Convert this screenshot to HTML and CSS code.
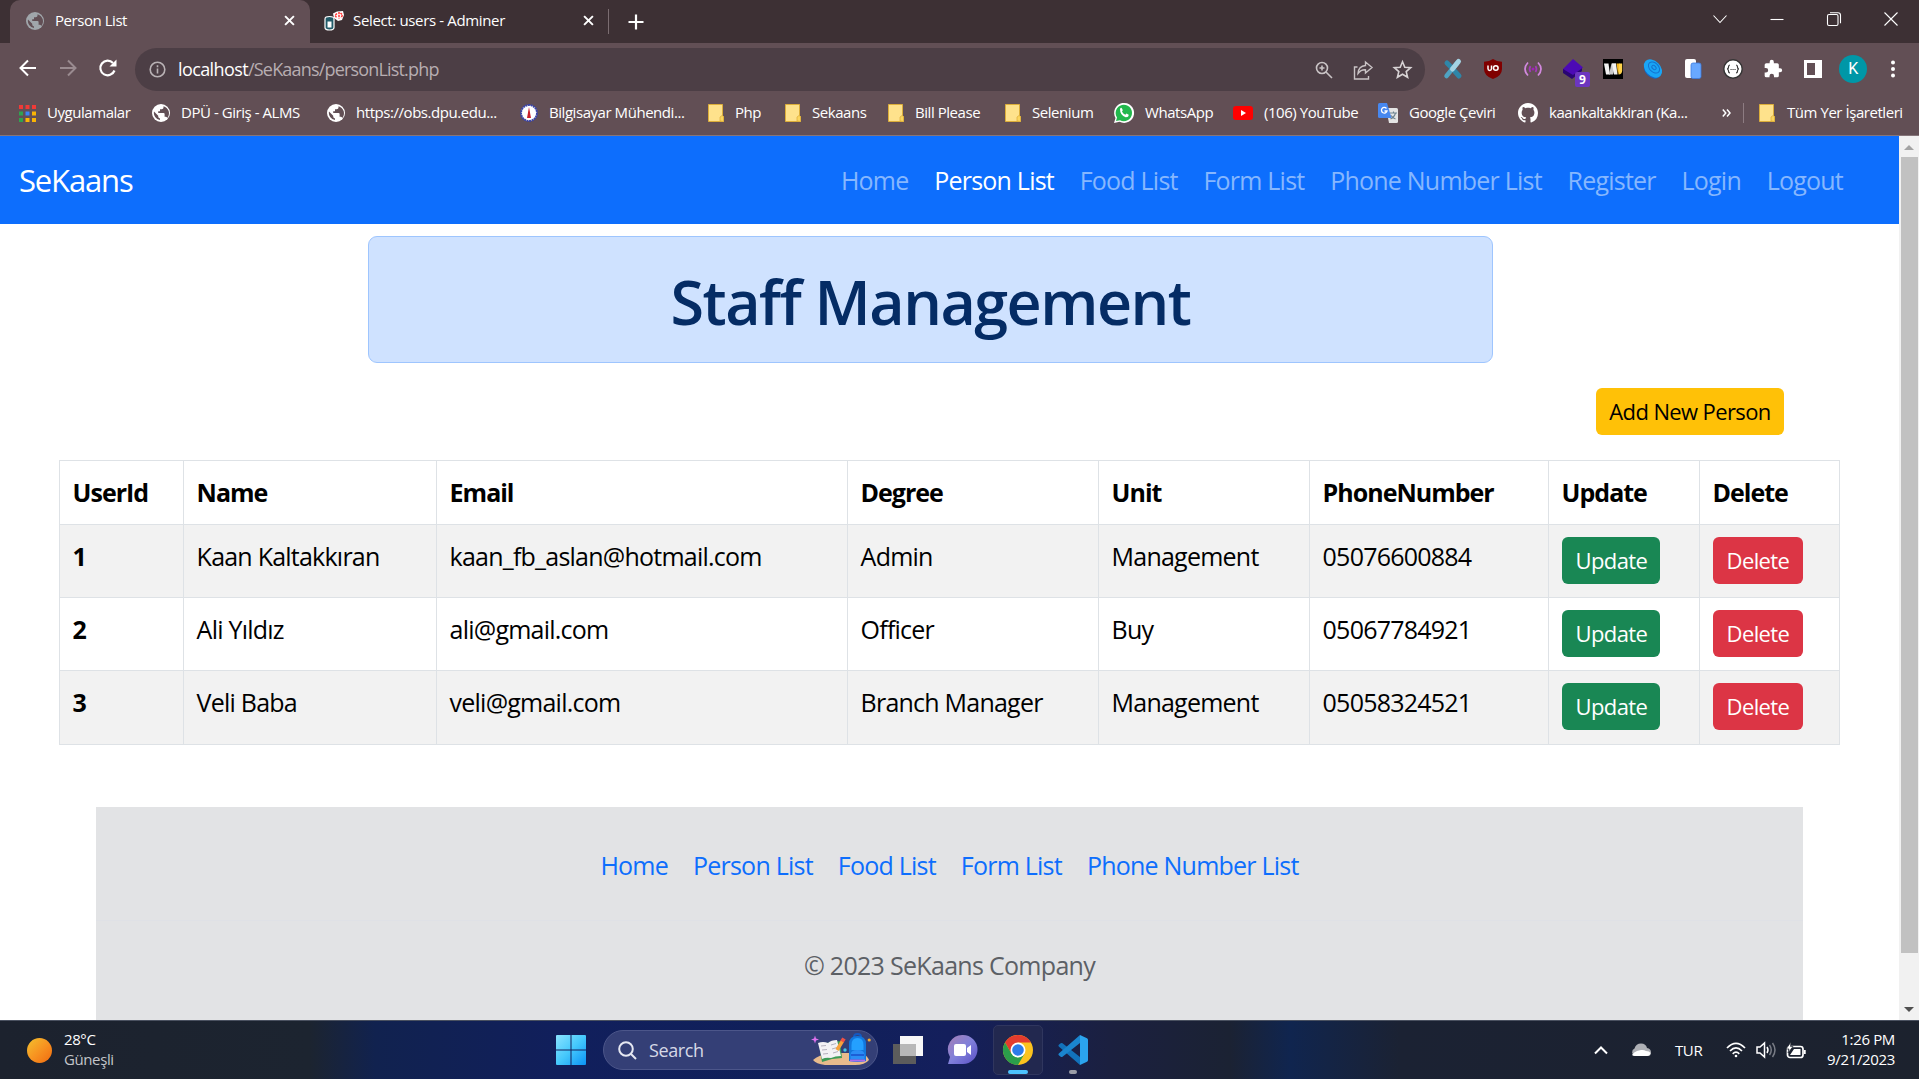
FILE: index.html
```html
<!DOCTYPE html>
<html lang="tr">
<head>
<meta charset="utf-8">
<title>Person List</title>
<link rel="stylesheet" href="styles.css">
</head>
<body>
<svg width="0" height="0" class="defs" aria-hidden="true">
  <defs>
    <symbol id="globe" viewBox="0 0 18 18"><circle cx="9" cy="9" r="9" fill="currentColor"/><path d="M11.500 2.300v1.200q0 1.800-1.800 1.800H8v1.900H6.200V9h5.400q1 0 1 1v2.700h1q1.200 0 1.700 1.200A7.200 7.200 0 0 0 11.500 2.300zM2 7.500A7.200 7.200 0 0 0 8 16.100V14.400q-1.800 0-1.800-1.800v-.9z" fill="var(--land)"/></symbol>
    <symbol id="folder" viewBox="0 0 16 18"><path d="M.5.5h14v11l1 1v5H.5z" fill="#fee28c" stroke="#dcae3a"/><path d="M12 17v-4l2-1.500 1.500 1v5z" fill="#fbd65f" stroke="#dcae3a" stroke-width=".7"/></symbol>
    <symbol id="cross" viewBox="0 0 10 10"><path d="m1 1 8 8M9 1 1 9" stroke="#fff" stroke-width="1.800" fill="none"/></symbol>
  </defs>
</svg>

<header class="chrome">
  <div class="tabstrip">
    <div class="tab tab-active">
      <svg class="fav gray-globe" width="18" height="18"><use href="#globe"/></svg>
      <span class="tab-title">Person List</span>
      <svg class="tab-close" width="11" height="11"><use href="#cross"/></svg>
    </div>
    <div class="tab tab-idle">
      <svg class="fav" width="20" height="20" viewBox="0 0 20 20"><path d="M1 8Q1 5.500 5.500 5.500T10 8v8.500Q10 19 5.500 19T1 16.500z" fill="#225b69" stroke="#fff" stroke-width="1.200"/><path d="M3.500 10.500h4v6h-4z" fill="#fff"/><path d="M9 2.500 13 .5l6-.5 1 4-2 5-4 1-4-3z" fill="#fff"/><path d="m13 2.500-2 2 2 2.500M16.500 2l2 2-1.500 3M15 1v6.500" fill="none" stroke="#f33" stroke-width="1.500" stroke-dasharray="2.200 .8"/></svg>
      <span class="tab-title">Select: users - Adminer</span>
      <svg class="tab-close" width="11" height="11"><use href="#cross"/></svg>
    </div>
    <span class="tab-sep"></span>
    <svg class="new-tab" width="16" height="16" viewBox="0 0 16 16"><path d="M8 .5v15M.5 8h15" stroke="#fff" stroke-width="2.200"/></svg>
    <div class="win-controls">
      <svg width="14" height="14" viewBox="0 0 14 14"><path d="m.5 3.500 6.500 7 6.500-7"/></svg>
      <svg width="14" height="14" viewBox="0 0 14 14"><path d="M.5 7.500h13"/></svg>
      <svg width="14" height="14" viewBox="0 0 14 14"><rect x=".5" y="2.500" width="10.500" height="11" rx="1.500"/><path d="M3 .8h8q2.500 0 2.500 2.500v8"/></svg>
      <svg width="14" height="14" viewBox="0 0 14 14"><path d="m.5.5 13 13M13.500.5l-13 13"/></svg>
    </div>
  </div>

  <div class="toolbar">
    <div class="nav-buttons">
      <svg width="18" height="18" viewBox="0 0 18 18"><path d="M17 9H2M9 1.500 1.500 9 9 16.500" fill="none" stroke="#fff" stroke-width="2"/></svg>
      <svg width="18" height="18" viewBox="0 0 18 18"><path d="M1 9h15M9 1.500 16.500 9 9 16.500" fill="none" stroke="#9a8b90" stroke-width="2"/></svg>
      <svg width="18" height="18" viewBox="0 0 18 18"><path d="M15.500 11.500A7.300 7.300 0 1 1 14 4" fill="none" stroke="#fff" stroke-width="2.200"/><path d="M17.500.5v7h-7z" fill="#fff"/></svg>
    </div>
    <div class="omnibox">
      <svg width="17" height="17" viewBox="0 0 17 17" fill="none" stroke="#b9b2b5" stroke-width="1.600"><circle cx="8.500" cy="8.500" r="7.300"/><path d="M8.500 7.500v5M8.500 4.300v1.900"/></svg>
      <span class="url"><b>localhost</b>/SeKaans/personList.php</span>
      <div class="omni-actions">
        <svg width="18" height="18" viewBox="0 0 18 18" fill="none" stroke="#c9c3c5" stroke-width="1.600"><circle cx="7" cy="7" r="5.500"/><path d="m11 11 6 6M4.500 7h5M7 4.500v5"/></svg>
        <svg width="20" height="20" viewBox="0 0 20 20" fill="none" stroke="#c9c3c5" stroke-width="1.400"><path d="M4.500 7H1.500v12h14v-3"/><path d="M12.500 2 19 7.500 12.500 13V9.800Q8 9.500 5 13.500q.5-7.500 7.500-8z"/></svg>
        <svg width="19" height="19" viewBox="0 0 19 19" fill="none" stroke="#d8d3d5" stroke-width="1.600"><path d="m9.500 1.800 2.300 5.400 5.900.5-4.500 3.900 1.400 5.700-5.100-3-5.100 3 1.400-5.700L1.300 7.700l5.900-.5z"/></svg>
      </div>
    </div>
    <div class="extensions">
      <svg width="20" height="20" viewBox="0 0 20 20"><path d="m4 4 4.500 4.500M12 12.500l4 4.500" stroke="#2e86a8" stroke-width="5" stroke-linecap="round"/><path d="M14.500 3.500 3.500 17" stroke="#4fa3c2" stroke-width="4.500" stroke-linecap="round"/><path d="M15.500 2.500 9.500 10" stroke="#a5d3e3" stroke-width="5" stroke-linecap="round"/></svg>
      <svg width="18" height="20" viewBox="0 0 18 20"><path d="M9 0q4 2.800 9 2.800V10q0 7-9 10Q0 17 0 10V2.800Q5 2.800 9 0z" fill="#800000"/><path d="M4 6.500v3.300q0 1.700 1.700 1.700T7.500 9.800V6.500" fill="none" stroke="#fff" stroke-width="1.500"/><circle cx="11.800" cy="9" r="2.300" fill="none" stroke="#fff" stroke-width="1.500"/></svg>
      <svg width="18" height="16" viewBox="0 0 18 16" fill="none" stroke="#d289de" stroke-width="1.700"><path d="M4 1.500Q-2 8 4 14.500M14 1.500q6 6.500 0 13"/><path d="M6.500 5q-2 3 0 6M11.500 5q2 3 0 6" stroke="#a23ab8"/><circle cx="9" cy="8" r="1.500" fill="#a020b8" stroke="none"/></svg>
      <span class="ext-badged"><svg width="20" height="20" viewBox="0 0 20 20"><path d="M0 10v4l9 6 10-8V8z" fill="#2a0573"/><path d="m10 0 10 8.500L10 16 0 10z" fill="#4c0ab5"/></svg><i>9</i></span>
      <svg width="20" height="20" viewBox="0 0 20 20"><path d="M0 0h20v20H0z"/><path d="M1 4.500h4.500l1.500 11H3z" fill="#f2f2f2"/><path d="M6 15.500 8.500 4.500H13l-3 11z" fill="#c9c9c9"/><path d="M9 4.500h4l1.500 11H11z" fill="#f2f2f2"/><path d="m13.500 4.500 1.500 11 1.500-5V4.500z" fill="#f4b51c"/><path d="M16 4.500h3.200v7q-.2 4-3.700 4z" fill="#ffd24a"/></svg>
      <svg width="20" height="20" viewBox="0 0 20 20"><ellipse cx="9" cy="11.500" rx="9.500" ry="6.500" transform="rotate(45 9 11.500)" fill="#1468c7"/><ellipse cx="10" cy="9.500" rx="10.500" ry="7.500" transform="rotate(45 10 9.500)" fill="#19a5f5"/><ellipse cx="11" cy="8.500" rx="6.500" ry="4.500" transform="rotate(45 11 8.500)" fill="none" stroke="#1472cf"/><ellipse cx="11" cy="8.500" rx="2.500" ry="1.700" transform="rotate(45 11 8.500)" fill="none" stroke="#1472cf"/></svg>
      <svg width="18" height="20" viewBox="0 0 18 20"><rect x="1" width="11" height="19" rx="2" fill="#fff"/><rect x="7" y="4" width="10" height="15.500" rx="2" fill="#68a8ff" stroke="#3c7ce0" stroke-width=".8"/></svg>
      <svg width="20" height="20" viewBox="0 0 20 20"><circle cx="10" cy="10" r="9.200" fill="#fff" stroke="#333" stroke-width="1.400"/><path d="M7 6Q5.500 6 5.500 8T4 10q1.500 0 1.500 2T7 14M13 6q1.500 0 1.500 2t1.500 2q-1.500 0-1.500 2T13 14" fill="none" stroke="#333" stroke-width="1.200"/><path d="M7.500 10.500h5.500" stroke="#333" stroke-width="1.200" stroke-dasharray="1.100 .9"/></svg>
      <svg width="20" height="20" viewBox="0 0 24 24"><path fill="#fff" d="M20.500 11H19V7a2 2 0 0 0-2-2h-4V3.500a2.500 2.500 0 0 0-5 0V5H4a2 2 0 0 0-2 2v3.800h1.500a2.700 2.700 0 0 1 0 5.400H2V20a2 2 0 0 0 2 2h3.800v-1.500a2.700 2.700 0 0 1 5.400 0V22H17a2 2 0 0 0 2-2v-4h1.500a2.500 2.500 0 0 0 0-5z"/></svg>
      <svg width="18" height="18" viewBox="0 0 18 18"><path d="M1.500 1.500h15v15h-15z" fill="none" stroke="#fff" stroke-width="3"/><path d="M11 1h6v16h-6z" fill="#fff"/></svg>
      <span class="avatar">K</span>
      <svg width="4" height="18" viewBox="0 0 4 18" fill="#fff"><circle cx="2" cy="2.500" r="2"/><circle cx="2" cy="9" r="2"/><circle cx="2" cy="15.500" r="2"/></svg>
    </div>
  </div>

  <nav class="bookmarks">
    <span class="bm"><svg width="17" height="17" viewBox="0 0 17 17"><path d="M0 0h4v4H0zM6.500 0h4v4h-4zM13 0h4v4h-4z" fill="#f03a37"/><path d="M0 6.500h4v4H0zM0 13h4v4H0z" fill="#2fa350"/><path d="M6.500 6.500h4v4h-4z" fill="#3a83f5"/><path d="M13 6.500h4v4h-4zM6.500 13h4v4h-4zM13 13h4v4h-4z" fill="#fbb404"/></svg><span>Uygulamalar</span></span>
    <span class="bm"><svg class="white-globe" width="18" height="18"><use href="#globe"/></svg><span>DPÜ - Giriş - ALMS</span></span>
    <span class="bm"><svg class="white-globe" width="18" height="18"><use href="#globe"/></svg><span>https://obs.dpu.edu...</span></span>
    <span class="bm"><svg width="18" height="18" viewBox="0 0 18 18"><circle cx="9" cy="9" r="8" fill="#fff" stroke="#3a44a8" stroke-width="2" stroke-dasharray="2 .6"/><path d="m9 3-2 11h4z" fill="#c8202c"/></svg><span>Bilgisayar Mühendi...</span></span>
    <span class="bm"><svg width="16" height="18"><use href="#folder"/></svg><span>Php</span></span>
    <span class="bm"><svg width="16" height="18"><use href="#folder"/></svg><span>Sekaans</span></span>
    <span class="bm"><svg width="16" height="18"><use href="#folder"/></svg><span>Bill Please</span></span>
    <span class="bm"><svg width="16" height="18"><use href="#folder"/></svg><span>Selenium</span></span>
    <span class="bm"><svg width="20" height="20" viewBox="0 0 20 20"><path d="M0 20 1.500 15A10 10 0 1 1 5.500 18.800z" fill="#fff"/><path d="m2 18 1-3.500a8.200 8.200 0 1 1 3 2.700z" fill="#22b84c"/><path d="M6 6q1-2 2-.5l.8 1.800-.8 1.200q1 2.300 3.300 3.200l1.200-1.200 2.200 1.200q0 2.600-3 2.500Q6 12.500 6 6z" fill="#fff"/></svg><span>WhatsApp</span></span>
    <span class="bm"><svg width="20" height="14" viewBox="0 0 20 14"><rect width="20" height="14" rx="3" fill="#f00"/><path d="m8 4 5 3-5 3z" fill="#fff"/></svg><span>(106) YouTube</span></span>
    <span class="bm"><svg width="20" height="20" viewBox="0 0 20 20"><path d="M8 5h10.500q1.500 0 1.500 1.500V18.500q0 1.500-1.500 1.500H11z" fill="#e4e4e4"/><path d="M12 10h7M15.500 8.500V10m2 0q-1 4-5 6m0-4q2 3 5 4" fill="none" stroke="#6d8390" stroke-width="1.100"/><path d="M1.500 0H9l4.500 15h-12Q0 15 0 13.500V1.500Q0 0 1.500 0z" fill="#4788f0"/><path d="M8.500 5.500A2.800 2.800 0 1 0 9 8H6.500" fill="none" stroke="#fff" stroke-width="1.300"/></svg><span>Google Çeviri</span></span>
    <span class="bm"><svg width="20" height="20" viewBox="0 0 16 16"><path fill="#fff" d="M8 0C3.580 0 0 3.580 0 8c0 3.540 2.290 6.530 5.470 7.590.4.070.55-.17.55-.38 0-.19-.01-.82-.01-1.490-2.010.37-2.530-.49-2.690-.94-.09-.23-.48-.94-.82-1.130-.28-.15-.68-.52-.01-.53.63-.01 1.080.58 1.230.82.72 1.210 1.870.87 2.330.66.070-.52.28-.87.51-1.070-1.780-.2-3.640-.89-3.640-3.950 0-.87.31-1.590.82-2.150-.08-.2-.36-1.020.08-2.120 0 0 .67-.21 2.200.82.64-.18 1.320-.27 2-.27s1.360.09 2 .27c1.530-1.040 2.200-.82 2.200-.82.44 1.100.16 1.920.08 2.120.51.56.82 1.270.82 2.150 0 3.070-1.870 3.750-3.650 3.950.29.25.54.73.54 1.480 0 1.070-.01 1.930-.01 2.200 0 .21.15.46.55.38A8.010 8.010 0 0 0 16 8c0-4.420-3.580-8-8-8z"/></svg><span>kaankaltakkiran (Ka...</span></span>
    <span class="bm bm-more"><svg width="9" height="8" viewBox="0 0 9 8"><path d="m.8.5 3 3.500-3 3.500M5 .5 8 4 5 7.500" fill="none" stroke="#fff" stroke-width="1.500"/></svg></span>
    <span class="bm bm-all"><svg width="16" height="18"><use href="#folder"/></svg><span>Tüm Yer İşaretleri</span></span>
  </nav>
</header>

<div class="viewport">
  <main class="page">
    <nav class="navbar">
      <a class="brand">SeKaans</a>
      <ul class="nav-links">
        <li>Home</li><li class="active">Person List</li><li>Food List</li><li>Form List</li><li>Phone Number List</li><li>Register</li><li>Login</li><li>Logout</li>
      </ul>
    </nav>
    <h1 class="banner">Staff Management</h1>
    <div class="actions"><a class="btn btn-warning">Add New Person</a></div>
    <table class="people">
      <colgroup><col class="c-id"><col class="c-name"><col class="c-email"><col class="c-degree"><col class="c-unit"><col class="c-phone"><col class="c-update"><col class="c-delete"></colgroup>
      <thead><tr><th>UserId</th><th>Name</th><th>Email</th><th>Degree</th><th>Unit</th><th>PhoneNumber</th><th>Update</th><th>Delete</th></tr></thead>
      <tbody>
        <tr><th>1</th><td>Kaan Kaltakkıran</td><td>kaan_fb_aslan@hotmail.com</td><td>Admin</td><td>Management</td><td>05076600884</td><td><a class="btn btn-success">Update</a></td><td><a class="btn btn-danger">Delete</a></td></tr>
        <tr><th>2</th><td>Ali Yıldız</td><td>ali@gmail.com</td><td>Officer</td><td>Buy</td><td>05067784921</td><td><a class="btn btn-success">Update</a></td><td><a class="btn btn-danger">Delete</a></td></tr>
        <tr><th>3</th><td>Veli Baba</td><td>veli@gmail.com</td><td>Branch Manager</td><td>Management</td><td>05058324521</td><td><a class="btn btn-success">Update</a></td><td><a class="btn btn-danger">Delete</a></td></tr>
      </tbody>
    </table>
    <footer class="site-footer">
      <ul class="footer-links"><li>Home</li><li>Person List</li><li>Food List</li><li>Form List</li><li>Phone Number List</li></ul>
      <p class="copyright">© 2023 SeKaans Company</p>
    </footer>
  </main>
  <div class="scrollbar">
    <svg width="10" height="5" viewBox="0 0 10 5"><path d="m5 0 5 5H0z" fill="#a3a3a3"/></svg>
    <span class="thumb"></span>
    <svg class="down" width="10" height="5" viewBox="0 0 10 5"><path d="M0 0h10L5 5z" fill="#505050"/></svg>
  </div>
</div>

<footer class="taskbar">
  <div class="weather">
    <span class="sun"></span>
    <span class="two-line"><span>28°C</span><span class="dim">Güneşli</span></span>
  </div>
  <div class="apps">
    <svg class="start" width="30" height="30" viewBox="0 0 30 30"><defs><linearGradient id="win" x1="0" y1="0" x2="1" y2="1"><stop offset="0" stop-color="#8be3ff"/><stop offset=".5" stop-color="#45c8fc"/><stop offset="1" stop-color="#0b93f5"/></linearGradient></defs><path d="M1 0h13.500v14.500H0V1q0-1 1-1zM15.500 0H29q1 0 1 1v13.500H15.500zM0 15.500h14.500V30H1q-1 0-1-1zM15.500 15.500H30V29q0 1-1 1H15.500z" fill="url(#win)"/></svg>
    <div class="search">
      <svg width="19" height="19" viewBox="0 0 19 19" fill="none" stroke="#e6e8f2" stroke-width="2"><circle cx="8" cy="8" r="6.800"/><path d="m13 13 5 5"/></svg>
      <span>Search</span>
      <svg class="school" width="60" height="34" viewBox="0 0 60 34">
        <path d="M2 27q5-5 18-7l32 0q5 4 6 7-4 5-14 5H14q-9-1-12-5z" fill="#e8bb8c"/>
        <path d="m8 11 21-3 2 17-10 1-10 3z" fill="#3d9b57"/>
        <path d="m7 10q5-2 10 0l3 15q-5-1-9 1zM17 10q3-3 9-3l4 16q-6 0-10 2z" fill="#f3f1f5"/>
        <path d="m10 13 5-.5M11 17l5-.5M12 21l5-.5M20 12l5-1.500M21 16l5-1.500M22 20l5-1.500" stroke="#b4b0bd" stroke-width="1"/>
        <path d="m26 17 5.500-9" stroke="#f8a13c" stroke-width="3.500"/><path d="m31 8.500 2-3" stroke="#ee5145" stroke-width="4"/>
        <path d="M43 4q0-3 3.500-3T50 4" fill="none" stroke="#1459c2" stroke-width="2"/>
        <path d="M38 28V11q0-8 8.500-8T55 11v17q-8.500 2-17 0z" fill="#1276dc"/><path d="M40.500 12q0-7 6-7t6 7v5h-12z" fill="#24a0ff"/><path d="M39.500 22q0-5 7-5t7 5v4h-14z" fill="#2b8df5"/><path d="M40 22h13" stroke="#194fcb" stroke-width="1.500"/>
        <path d="M39 27.500h15" stroke="#b06bea" stroke-width="2"/>
        <path d="M4 2.500l1 3 3 1-3 1-1 3-1-3-3-1 3-1z" fill="#df72ef"/><circle cx="34" cy="17" r="1.700" fill="#45c6e8"/><circle cx="58.200" cy="7" r="1.600" fill="#f4ac30"/>
      </svg>
    </div>
    <svg width="30" height="28" viewBox="0 0 30 28"><path d="M0 8h23v20H0z" fill="#5c5c5c"/><path d="M7 0h23v20H7z" fill="#f7f7f7"/><path d="M7 8h16v12H7z" fill="#b8b8b8"/></svg>
    <svg width="30" height="30" viewBox="0 0 30 30"><defs><linearGradient id="chat" x1="0" y1="0" x2="1" y2="1"><stop offset="0" stop-color="#a780b5"/><stop offset=".5" stop-color="#8080da"/><stop offset="1" stop-color="#5a4fc5"/></linearGradient></defs><path d="M15 0a14.500 14.500 0 0 1 0 29H0l2-7A14.500 14.500 0 0 1 15 0z" fill="url(#chat)"/><rect x="6" y="9" width="12" height="12" rx="2" fill="#fff"/><path d="m19 13 4-3v10l-4-3z" fill="#fff"/></svg>
    <span class="app app-current"><svg width="30" height="30" viewBox="0 0 30 30"><circle cx="15" cy="15" r="15" fill="#fcc31e"/><path d="M2 7.500A15 15 0 0 1 28 7.500H15L8.500 18.800z" fill="#e33b2e"/><path d="M2 7.500 8.500 18.750 15 22.500l6.500-3.700L15 30A15 15 0 0 1 2 7.500z" fill="#2b9d4b"/><circle cx="15" cy="15" r="7.500" fill="#fff"/><circle cx="15" cy="15" r="5.800" fill="#2d7be9"/></svg></span>
    <span class="app"><svg width="30" height="30" viewBox="0 0 30 30"><path d="M.8 9.800q-.9.900 0 1.800L22 30v-8L4.500 8.300q-1-.7-1.800 0z" fill="#1272bb"/><path d="M.8 20.200q-.9-.9 0-1.800L22 0v8L4.500 21.700q-1 .7-1.800 0z" fill="#1a85cf"/><path d="m22 0 7 3.300q1 .5 1 1.700v20q0 1.200-1 1.700L22 30z" fill="#2ba4ee"/></svg></span>
  </div>
  <div class="tray">
    <svg width="14" height="9" viewBox="0 0 14 9"><path d="m1 7.500 6-6 6 6" fill="none" stroke="#fff" stroke-width="2"/></svg>
    <svg width="20" height="14" viewBox="0 0 20 14"><path d="M4 13a4 4 0 0 1-.5-7.500Q5 .5 10 .5t6 4.500q4 .8 4 4.500T16 13z" fill="#aeb0b5"/><path d="M1 12q2-3 5-4l4-1q3-.500 5 1 3.500 0 4.500 2-.5 3-3.500 3H4q-2 0-3-1z" fill="#fff"/></svg>
    <span class="lang">TUR</span>
    <svg width="20" height="16" viewBox="0 0 20 16" fill="none" stroke="#fff" stroke-width="1.700"><path d="M1 6q9-9 18 0M4 9q6-6 12 0M6.700 11.800q3.300-3.300 6.600 0"/><circle cx="10" cy="14" r="1.300" fill="#fff" stroke="none"/></svg>
    <svg width="20" height="18" viewBox="0 0 20 18" fill="none" stroke="#fff" stroke-width="1.500"><path d="M1 6h3l4.500-4v14L4 12H1zM11 6q2 3 0 6"/><path d="M13.500 4q3.500 5 0 10M16.500 2q5 7 0 14" stroke="#777b84"/></svg>
    <svg width="20" height="17" viewBox="0 0 20 17"><rect x="1.500" y="4.500" width="15.500" height="11" rx="2.500" fill="none" stroke="#fff" stroke-width="1.700"/><path d="M18 8h1.700v4H18zM8 7h6.500v6H4z" fill="#fff"/><path d="M5 0 0 7h3l-1 4 5-6.500H4.500z" fill="#fff" stroke="#1c222e" stroke-width=".7"/></svg>
    <span class="two-line clock"><span>1:26 PM</span><span>9/21/2023</span></span>
  </div>
</footer>
</body>
</html>
```
FILE: styles.css
```css
* { box-sizing: border-box; }
body {
  margin: 0; width: 1919px; height: 1079px; overflow: hidden;
  display: flex; flex-direction: column;
  font-family: "Open Sans", "Noto Sans", sans-serif; color: #000; background: #fff;
}
svg { display: block; flex: none; overflow: visible; }
.defs { position: absolute; }
ul { list-style: none; margin: 0; padding: 0; }

/* Browser window */
.chrome { height: 136px; flex: none; background: #624f55; border-bottom: 1px solid #85757a; color: #fff; font-size: 15px; letter-spacing: -.45px; }
.tabstrip { height: 43px; background: #3d3034; display: flex; align-items: center; }
.tab { height: 43px; display: flex; align-items: center; }
.tab-active { margin-left: 10px; width: 300px; padding: 0 15px 2px 16px; background: #624f55; border-radius: 10px 10px 0 0; }
.tab-idle { width: 298px; padding: 0 14px 2px 14px; letter-spacing: -.35px; }
.tab-title { margin-left: 11px; line-height: 20px; padding-bottom: 1px; white-space: nowrap; }
.tab-idle .tab-title { margin-left: 9px; }
.tab-close { margin-left: auto; }
.gray-globe { color: #a0a6ab; --land: #624f55; }
.white-globe { color: #fff; --land: #624f55; }
.tab-sep { width: 1px; height: 25px; background: #7b6d71; }
.new-tab { margin-left: 19px; }
.win-controls { margin-left: auto; height: 37px; display: flex; align-items: center; gap: 43px; padding-right: 21px; align-self: flex-start; }
.win-controls svg { fill: none; stroke: #fff; stroke-width: 1.1; }
.toolbar { height: 48px; display: flex; padding-top: 5px; }
.nav-buttons { width: 135px; padding-left: 19px; padding-bottom: 4px; display: flex; align-items: center; gap: 22px; }
.omnibox { width: 1290px; height: 43px; border-radius: 22px; background: #4c3e45; display: flex; align-items: center; padding: 0 13px 0 14px; }
.url { margin-left: 12px; font-size: 18px; line-height: 24px; padding-bottom: 1px; letter-spacing: -.82px; color: #b7adb1; }
.url b { color: #fff; font-weight: 400; letter-spacing: -.6px; }
.omni-actions { margin-left: auto; display: flex; gap: 20px; align-items: center; }
.extensions { margin-left: 8px; display: grid; grid-template-columns: repeat(12, 40px); place-items: center; height: 42px; }
.ext-badged { position: relative; }
.ext-badged i { position: absolute; left: 12px; top: 13px; width: 15px; height: 15px; border-radius: 2px; background: #6c36bf; font: 700 12px/15px "Open Sans", sans-serif; text-align: center; letter-spacing: 0; }
.avatar { width: 28px; height: 28px; border-radius: 50%; background: #0097a7; text-align: center; font: 16px/28px Roboto, sans-serif; }
.bookmarks {
  height: 44px; display: grid; align-items: center; padding-left: 19px;
  grid-template-columns: 133px 175px 193px 188px 77px 103px 117px 109px 119px 145px 140px 204px 21px auto;
}
.bm { display: flex; align-items: center; gap: 11px; white-space: nowrap; line-height: 20px; }
.bm > span { padding-bottom: 2px; }
.bm-all { border-left: 1px solid #8d7c82; height: 20px; padding-left: 15px; gap: 12px; }

/* Page */
.viewport { height: 884px; flex: none; display: flex; overflow: hidden; }
.page { width: 1899px; background: #fff; font-size: 25px; letter-spacing: -.77px; }
.navbar { height: 88px; background: #0d6efd; display: flex; align-items: center; justify-content: space-between; padding: 0 56px 0 19px; }
.brand { color: #fff; font-size: 31px; line-height: 40px; letter-spacing: -1.15px; }
.nav-links { display: flex; gap: 25.7px; color: #86b7fe; line-height: 38px; }
.nav-links .active { color: #fff; }
.banner { margin: 12px 0 0 368px; width: 1125px; height: 127px; border: 1px solid #9ec5fe; border-radius: 9px; background: #cfe2ff; color: #052c65; font-size: 61px; font-weight: 600; line-height: 130px; letter-spacing: -1.5px; text-align: center; }
.actions { display: flex; justify-content: flex-end; padding: 25px 115px 0 0; height: 97px; }
.btn { display: inline-block; height: 47px; line-height: 47px; padding: 0 14px; border-radius: 6px; font-size: 22px; letter-spacing: -.62px; text-align: center; white-space: nowrap; vertical-align: top; }
.btn-warning { width: 188px; padding: 0; background: #ffc107; color: #000; }
.btn-success { width: 98px; background: #198754; color: #fff; }
.btn-danger { width: 90px; background: #dc3545; color: #fff; }
.people { margin-left: 59px; width: 1780px; table-layout: fixed; border-collapse: collapse; }
.c-id { width: 124px; } .c-name { width: 253px; } .c-email { width: 411px; } .c-degree { width: 251px; }
.c-unit { width: 211px; } .c-phone { width: 239px; } .c-update { width: 151px; } .c-delete { width: 140px; }
.people th, .people td { border: 1px solid #dee2e6; padding: 12px 12px 0 12.6px; text-align: left; vertical-align: top; line-height: 39px; white-space: nowrap; }
.people .btn { line-height: 47px; }
.people thead tr { height: 64px; }
.people tbody tr { height: 73px; }
.people tbody tr:last-child { height: 74px; }
.people tbody tr:nth-child(odd) { background: #f2f2f2; }
.people th { letter-spacing: -1px; }
.site-footer { margin: 62px 0 0 96px; width: 1707px; height: 240px; background: #e2e3e5; }
.footer-links { height: 114px; padding-top: 39px; display: flex; justify-content: center; gap: 25px; color: #0d6efd; line-height: 38px; border-bottom: 1px solid #dfe1e6; }
.copyright { margin: 0; padding-top: 25px; text-align: center; color: #5c6065; line-height: 38px; letter-spacing: -.7px; }
.scrollbar { width: 20px; background: #f1f1f1; display: flex; flex-direction: column; align-items: center; padding: 9px 0 8px; }
.thumb { width: 17px; height: 796px; margin-top: 7px; background: #c1c1c1; }
.down { margin-top: auto; }

/* Taskbar */
.taskbar {
  height: 59px; flex: none; border-top: 1px solid #4a5160; color: #fff; font-size: 15px; letter-spacing: -.4px;
  display: grid; grid-template-columns: 556px 1fr auto; align-items: center;
  background: linear-gradient(90deg, #1c222e 0, #1c2430 310px, #11224f 375px, #111f5c 560px, #10205a 800px, #141f5c 950px, #1b2040 1110px, #1b2233 1230px, #10254f 1290px, #1b2233 1400px, #1c222e 100%);
}
.weather { display: flex; align-items: center; padding-left: 27px; gap: 12px; }
.sun { width: 25px; height: 25px; border-radius: 50%; background: linear-gradient(135deg, #f2c12e, #f79421 50%, #f06a10); }
.two-line { display: flex; flex-direction: column; line-height: 20px; padding-bottom: 2px; }
.dim { color: #c3c5ca; }
.apps { display: flex; align-items: center; height: 58px; }
.search { width: 275px; height: 40px; margin: 0 15px 0 17px; border-radius: 20px; background: #343f76; border: 1px solid #4c568a; display: flex; align-items: center; padding-left: 14px; gap: 12px; font-size: 18px; color: #d6d9e6; }
.school { margin-left: auto; margin-right: 6px; }
.apps > svg + svg { margin-left: 25px; }
.app { width: 50px; height: 50px; display: grid; place-items: center; border-radius: 5px; margin-left: 5px; position: relative; }
.app-current { background: #22284f; border: 1px solid #30365e; margin-left: 15px; }
.app::after { content: ""; position: absolute; bottom: 1px; left: 21px; width: 8px; height: 4px; border-radius: 2px; background: #9b9da8; }
.app-current::after { left: 14px; bottom: 0; width: 20px; background: #4cc2ff; }
.tray { display: flex; align-items: center; padding-right: 24px; }
.tray > svg:nth-child(2) { margin-left: 23px; }
.lang { margin: 0 23px 0 24px; width: 28px; }
.tray > svg:nth-child(5), .tray > svg:nth-child(6) { margin-left: 10px; }
.clock { text-align: right; width: 89px; letter-spacing: -.35px; }
```
